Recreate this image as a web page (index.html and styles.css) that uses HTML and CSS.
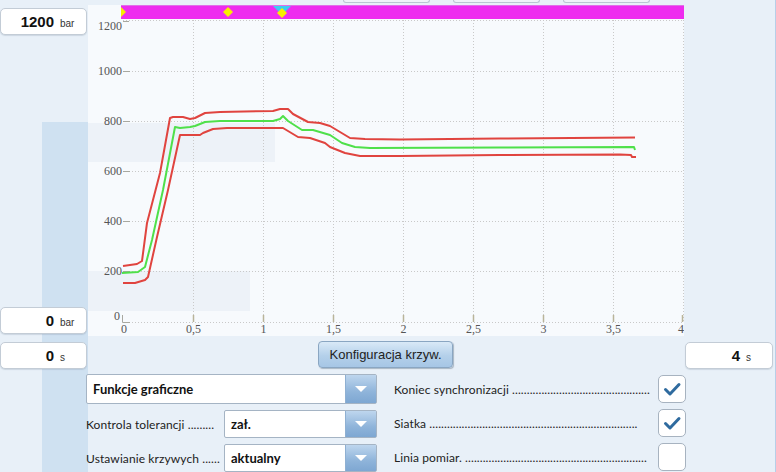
FILE: index.html
```html
<!DOCTYPE html>
<html lang="pl">
<head>
<meta charset="utf-8">
<title>Krzywa</title>
<link rel="stylesheet" href="styles.css">
</head>
<body>
<div class="topbar"><span class="stub"></span><span class="stub"></span><span class="stub"></span></div>
<div class="main">
  <div class="yside">
    <div class="valbox"><span class="num">1200</span><span class="unit">bar</span></div>
    <div class="valbox"><span class="num">0</span><span class="unit">bar</span></div>
  </div>
  <div class="chart">
    <svg width="596" height="331" viewBox="88 5 596 331" xmlns="http://www.w3.org/2000/svg">
      <rect x="88" y="5" width="596" height="331" fill="#f7fafd"/>
      <rect x="88" y="123" width="187" height="39" fill="#edf2f8"/>
      <rect x="88" y="271" width="162" height="40" fill="#edf2f8"/>
      <g stroke="#c9c9c9" stroke-width="1" stroke-dasharray="1 2">
        <line x1="123" y1="20.5" x2="684" y2="20.5"/>
        <line x1="123" y1="71.5" x2="684" y2="71.5"/>
        <line x1="123" y1="121.5" x2="684" y2="121.5"/>
        <line x1="123" y1="171.5" x2="684" y2="171.5"/>
        <line x1="123" y1="221.5" x2="684" y2="221.5"/>
        <line x1="123" y1="271.5" x2="684" y2="271.5"/>
        <line x1="123" y1="322.5" x2="684" y2="322.5"/>
        <line x1="193.5" y1="20" x2="193.5" y2="322"/>
        <line x1="263.5" y1="20" x2="263.5" y2="322"/>
        <line x1="333.5" y1="20" x2="333.5" y2="322"/>
        <line x1="403.5" y1="20" x2="403.5" y2="322"/>
        <line x1="473.5" y1="20" x2="473.5" y2="322"/>
        <line x1="543.5" y1="20" x2="543.5" y2="322"/>
        <line x1="613.5" y1="20" x2="613.5" y2="322"/>
        <line x1="683.5" y1="20" x2="683.5" y2="322"/>
      </g>
      <g stroke="#a8a8a0" stroke-width="1">
        <line x1="123" y1="21.5" x2="129" y2="21.5"/>
        <line x1="123" y1="71.5" x2="130" y2="71.5"/>
        <line x1="123" y1="121.5" x2="130" y2="121.5"/>
        <line x1="123" y1="171.5" x2="130" y2="171.5"/>
        <line x1="123" y1="221.5" x2="130" y2="221.5"/>
        <line x1="123" y1="271.5" x2="130" y2="271.5"/>
        <polyline fill="none" points="122.5,315 122.5,322.5 130,322.5"/>
      </g>
      <g stroke="#b9b49a" stroke-width="1.5">
        <line x1="193.5" y1="315" x2="193.5" y2="322"/>
        <line x1="263.5" y1="315" x2="263.5" y2="322"/>
        <line x1="333.5" y1="315" x2="333.5" y2="322"/>
        <line x1="403.5" y1="315" x2="403.5" y2="322"/>
        <line x1="473.5" y1="315" x2="473.5" y2="322"/>
        <line x1="543.5" y1="315" x2="543.5" y2="322"/>
        <line x1="613.5" y1="315" x2="613.5" y2="322"/>
        <line x1="682.5" y1="315" x2="682.5" y2="322"/>
      </g>
      <g class="ylab" text-anchor="end">
        <text x="122" y="30">1200</text>
        <text x="122" y="75">1000</text>
        <text x="122" y="125">800</text>
        <text x="122" y="175">600</text>
        <text x="122" y="225">400</text>
        <text x="122" y="275">200</text>
        <text x="120" y="320">0</text>
      </g>
      <g class="xlab" text-anchor="middle">
        <text x="124" y="333">0</text>
        <text x="193.5" y="333">0,5</text>
        <text x="263.5" y="333">1</text>
        <text x="333.5" y="333">1,5</text>
        <text x="403.5" y="333">2</text>
        <text x="473.5" y="333">2,5</text>
        <text x="543.5" y="333">3</text>
        <text x="613.5" y="333">3,5</text>
        <text x="681" y="333">4</text>
      </g>
      <rect x="121" y="5" width="563" height="14" fill="#ee2cef"/>
      <line x1="121" y1="5.5" x2="684" y2="5.5" stroke="#e070e8" stroke-width="1"/>
      <polygon points="121,7 126,12 121,17" fill="#f8ee00"/>
      <polygon points="228,7 233,12 228,17 223,12" fill="#f8ee00"/>
      <polygon points="273,6 291,6 282,15" fill="#3ccdf2"/>
      <polygon points="282,8 287,13 282,18 277,13" fill="#f8ee00"/>
      <g fill="none" stroke-width="2" stroke-linejoin="round">
        <polyline stroke="#e0443f" points="123,266 137,264 142,261 147,223 160,173 170,118 173,117 183,117 190,119 195,118 205,113 220,112 273,111 280,109 288,109 293,114 308,122 320,123 330,126 340,132 350,138 365,139 400,139.5 500,138.5 635,137.5"/>
        <polyline stroke="#4fe04a" points="122,273 138,272 145,267 152,240 163,190 175,127 180,128 190,127 195,126 205,122 220,121 273,121 280,119 283,116 288,121 302,130 313,130 330,135 342,143 355,147 370,148 500,147.5 634,147 635,150"/>
        <polyline stroke="#e0443f" points="123,283 135,283 145,280 148,277 157,237 168,190 180,135 200,135 203,133 213,129 227,128 283,128 288,131 298,137 310,138 325,143 330,147 345,153 360,156 400,156 500,155 620,154.5 631,155 632,157 636,157"/>
      </g>
    </svg>
  </div>
</div>
<div class="xrow">
  <div class="valbox"><span class="num">0</span><span class="unit">s</span></div>
  <button class="cfg" type="button">Konfiguracja krzyw.</button>
  <div class="valbox right"><span class="num">4</span><span class="unit">s</span></div>
</div>
<div class="opts">
  <div class="col left">
    <div class="dd wide"><span class="val">Funkcje graficzne</span><span class="arrow"></span></div>
    <div class="row">
      <span class="lbl">Kontrola tolerancji .........</span>
      <div class="dd"><span class="val">zał.</span><span class="arrow"></span></div>
    </div>
    <div class="row">
      <span class="lbl">Ustawianie krzywych ......</span>
      <div class="dd"><span class="val">aktualny</span><span class="arrow"></span></div>
    </div>
  </div>
  <div class="col right">
    <div class="row">
      <span class="lbl">Koniec synchronizacji ...............................................</span>
      <span class="cb"><svg width="26" height="26" viewBox="0 0 26 26"><polyline points="6.5,13.5 11,18 20,8.5" fill="none" stroke="#2f6b9f" stroke-width="3" stroke-linecap="round" stroke-linejoin="round"/></svg></span>
    </div>
    <div class="row">
      <span class="lbl">Siatka .......................................................................</span>
      <span class="cb"><svg width="26" height="26" viewBox="0 0 26 26"><polyline points="6.5,13.5 11,18 20,8.5" fill="none" stroke="#2f6b9f" stroke-width="3" stroke-linecap="round" stroke-linejoin="round"/></svg></span>
    </div>
    <div class="row">
      <span class="lbl">Linia pomiar. ..............................................................</span>
      <span class="cb"></span>
    </div>
  </div>
</div>
</body>
</html>
```

FILE: styles.css
```css
* { box-sizing: border-box; }
html, body { margin: 0; }
body {
  width: 776px;
  height: 472px;
  overflow: hidden;
  background: #e8f0f8 linear-gradient(#cfe1f1, #cfe1f1) 42px 122px / 46px 350px no-repeat;
  border-right: 1px solid #b7cfe8;
  font-family: Lato, "Open Sans", sans-serif;
  color: #222;
}
.topbar {
  height: 5px;
  display: flex;
  gap: 23px;
  padding-left: 343px;
}
.stub {
  width: 87px;
  height: 3px;
  border: 1px solid #b9c6d3;
  border-top: 0;
  border-radius: 0 0 4px 4px;
  background: #eef3f8;
}
.main {
  display: grid;
  grid-template-columns: 88px 596px;
  height: 331px;
}
.yside {
  display: flex;
  flex-direction: column;
  justify-content: space-between;
  padding: 3px 0 2px;
}
.valbox {
  width: 87px;
  height: 27px;
  background: #fff;
  border: 1px solid #c3ccd6;
  border-radius: 5px;
  display: flex;
  align-items: baseline;
  padding-top: 4px;
  line-height: 18px;
  box-shadow: 0 1px 1px rgba(120, 140, 160, 0.25);
}
.valbox .num {
  flex: 1;
  text-align: right;
  font: bold 15px "Liberation Sans", Arial, sans-serif;
  color: #111;
}
.valbox .unit {
  width: 26px;
  margin-left: 6px;
  font: 10px "Liberation Sans", Arial, sans-serif;
  color: #333;
}
.chart { overflow: hidden; }
.chart svg { display: block; }
.ylab, .xlab {
  font-family: "Liberation Serif", "Times New Roman", serif;
  font-size: 12px;
  fill: #555;
}
.xrow {
  height: 36px;
  display: flex;
  align-items: flex-start;
  padding-top: 6px;
}
.cfg {
  margin: -1px 0 0 231px;
  width: 135px;
  height: 27px;
  padding: 0;
  border: 1px solid #8aa6c2;
  border-radius: 4px;
  background: linear-gradient(#d9e9f7, #b4d0ea 55%, #a6c6e5);
  box-shadow: 1px 1px 1px rgba(90, 110, 130, 0.45);
  font: 13px "Liberation Sans", Arial, sans-serif;
  color: #222;
}
.valbox.right { margin-left: auto; margin-right: 2px; width: 88px; }
.opts {
  display: grid;
  grid-template-columns: 291px 292px;
  column-gap: 17px;
  padding-left: 86px;
}
.col {
  display: flex;
  flex-direction: column;
  gap: 6px;
}
.col.left { padding-top: 2px; }
.col.right { padding-top: 3px; }
.row {
  height: 28px;
  display: flex;
  align-items: center;
}
.lbl {
  white-space: nowrap;
  font-size: 12px;
  color: #222;
  letter-spacing: 0.1px;
}
.left .lbl { width: 138px; }
.right .lbl { flex: 1; margin-right: 6px; }
.dd {
  flex: 1;
  height: 100%;
  display: flex;
  background: #fff;
  border: 1px solid #a5b4c4;
  border-radius: 2px;
}
.dd.wide { flex: none; height: 30px; }
.dd .val {
  flex: 1;
  align-self: center;
  padding-left: 6px;
  font-weight: bold;
  font-size: 13px;
  color: #111;
}
.dd .arrow {
  width: 31px;
  background: linear-gradient(#bed6ee, #8fb4da 60%, #7ea7d2);
  border-left: 1px solid #8fb0d2;
  display: flex;
  align-items: center;
  justify-content: center;
}
.dd .arrow::after {
  content: "";
  border-left: 6px solid transparent;
  border-right: 6px solid transparent;
  border-top: 6px solid #fff;
}
.cb {
  flex: none;
  width: 28px;
  height: 28px;
  background: #fff;
  border: 1px solid #a7b3c0;
  border-radius: 5px;
  display: flex;
  align-items: center;
  justify-content: center;
}
.cb svg { display: block; }
```
